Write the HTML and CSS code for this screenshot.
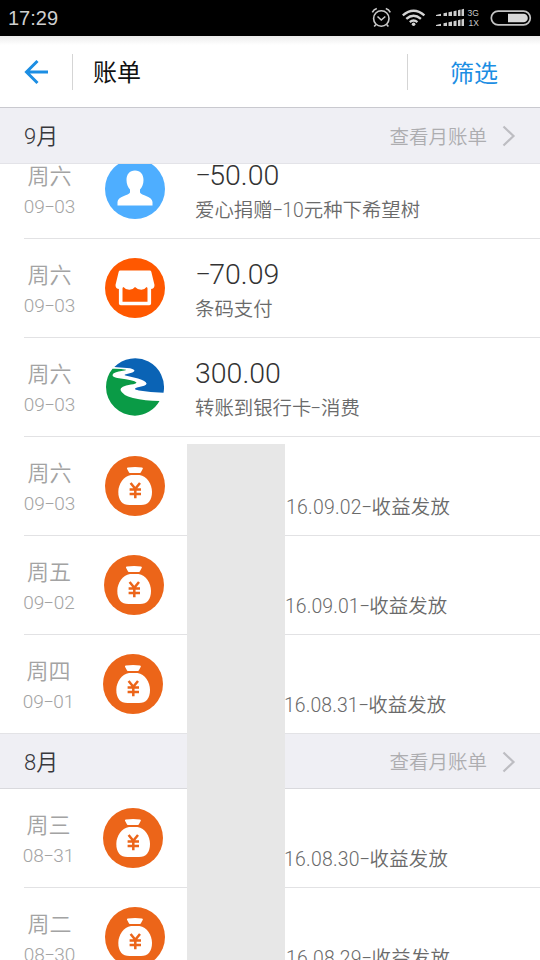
FILE: index.html
```html
<!DOCTYPE html>
<html lang="zh-CN">
<head>
<meta charset="utf-8">
<title>账单</title>
<link rel="stylesheet" href="styles.css">
</head>
<body>
<svg class="defs" width="0" height="0">
  <symbol id="bag" viewBox="0 0 60 60">
    <circle cx="30" cy="30" r="30" fill="#ec6519"/>
    <path d="M22.800 11.500q7.500-1 14.200 0q1.200.2.800 1.200l-1.900 3.500q-.5.900-1.600.9h-8.800q-1.100 0-1.600-.9l-1.900-3.500q-.4-1 .8-1.200z" fill="#fff"/>
    <path d="M26 19h8.500c7.500 1.200 12.500 9 12.500 17 0 8.500-4 13-11 13H24.500c-7.200 0-11.200-4.500-11.200-13 0-8 5.200-15.800 12.700-17z" fill="#fff"/>
    <path d="M25.600 27l4.700 5.800L35 27M30.300 33v9.200M24.600 33.500H36M24.600 38H36" fill="none" stroke="#ec6519" stroke-width="2.500"/>
  </symbol>
  <symbol id="chev" viewBox="0 0 14 22">
    <path d="M1.500 1.500L11.500 11L1.500 20.500" fill="none" stroke="#bdbdc2" stroke-width="2.200"/>
  </symbol>
</svg>
<div class="screen">
  <div class="status">
    <span class="clock">17:29</span>
    <svg class="status-icons" width="170" height="36" viewBox="370 0 170 36">
      <g fill="none" stroke="#c9c9c9" stroke-width="1.600">
        <circle cx="381.300" cy="18.500" r="7.700"/>
        <path d="M377.500 16.500l3.800 3.500l4-3.500M372.300 12.300q1.500-3 4.500-3.800M390.300 12.300q-1.500-3-4.500-3.800M376 24.500l-1.800 2M386.600 24.500l1.800 2"/>
      </g>
      <g fill="none" stroke="#d4d4d4" stroke-width="2.400">
        <path d="M402.800 15.300q10.800-9.300 21.600 0M406.300 18.800q7.300-6.100 14.600 0M409.800 22.200q3.800-3.200 7.600 0"/>
      </g>
      <circle cx="413.600" cy="24.300" r="1.800" fill="#d4d4d4"/>
      <g fill="#cdcdcd">
        <path d="M436 15l5-1.300v2.300h-5zM443.500 13.200l3.500-.7v3.500h-3.500zM448.500 12.200l3.500-.7v4.500h-3.500zM453.500 11.200l3-.7v5.500h-3zM458 10.200l2.500-.6v6.400H458zM461.500 9.400l2.500-.6v7.200h-2.500z"/>
        <path d="M436 25l5-1.300v2.300h-5zM443.500 23.200l3.500-.7v3.500h-3.500zM448.500 22.200l3.500-.7v4.500h-3.500zM453.500 21.200l3-.7v5.500h-3zM458 20.200l2.500-.6v6.400H458zM461.500 19.400l2.500-.6v7.200h-2.500z"/>
      </g>
      <text x="467.500" y="16.200" class="net">3G</text>
      <text x="468.500" y="26" class="net">1X</text>
      <rect x="491.300" y="11.200" width="39" height="13.600" rx="6.800" fill="none" stroke="#c4c4c4" stroke-width="1.700"/>
      <path d="M508 13.700h15.500a4.300 4.300 0 0 1 0 8.600H508z" fill="#d8d8d8"/>
    </svg>
  </div>

  <div class="header">
    <svg class="back" width="24" height="26" viewBox="0 0 24 26">
      <path d="M13.500 2L2.500 13L13.500 24M2.500 13H24" fill="none" stroke="#1c8ee3" stroke-width="3"/>
    </svg>
    <i class="bar"></i>
    <h1 class="title">账单</h1>
    <i class="bar"></i>
    <a class="filter">筛选</a>
  </div>

  <div class="month"><span class="m">9月</span><span class="more">查看月账单</span><svg class="chev"><use href="#chev"/></svg></div>

  <div class="list">
    <div class="row first">
      <div class="when"><b>周六</b><span>09<i class="dash">-</i>03</span></div>
      <svg class="icon" viewBox="0 0 60 60">
        <circle cx="30" cy="30" r="30" fill="#4eaeff"/>
        <path d="M30 11.500c5.500 0 8.500 4 8.500 9.500 0 4-1.500 7.500-3.500 9.500v3c1 3 12.500 4 12.500 9.500v3.500h-35V43c0-5.500 11.500-6.500 12.500-9.500v-3c-2-2-3.500-5.500-3.500-9.500 0-5.500 3-9.500 8.500-9.500z" fill="#fff"/>
      </svg>
      <div class="info"><p class="amount"><i class="dash">-</i>50.00</p><p class="desc">爱心捐赠<i class="dash">-</i>10元种下希望树</p></div>
    </div>
    <div class="row">
      <div class="when"><b>周六</b><span>09<i class="dash">-</i>03</span></div>
      <svg class="icon" viewBox="0 0 60 60">
        <circle cx="30" cy="30" r="30" fill="#ff5800"/>
        <path d="M15.300 12.500h29.400q1.200 0 1.600 1.200l3.200 13.300q0 4-3.800 4q-3 0-4.200-2q-1.800 2.800-5.300 2.800t-6.200-2.800q-2 2.800-5.700 2.800t-5.800-2.800q-1.200 2-4.200 2q-3.800 0-3.800-4l3.200-13.300q.4-1.200 1.600-1.200z" fill="#fff"/>
        <path d="M15.700 30v15.500h28.600V30" fill="none" stroke="#fff" stroke-width="3.600" stroke-linejoin="round"/>
      </svg>
      <div class="info"><p class="amount"><i class="dash">-</i>70.09</p><p class="desc">条码支付</p></div>
    </div>
    <div class="row">
      <div class="when"><b>周六</b><span>09<i class="dash">-</i>03</span></div>
      <svg class="icon" viewBox="0 0 60 60">
        <path d="M9.300 10A29 29 0 0 1 58.500 35.800Q45 35.500 34 33.500Q27 32 32 30.500Q42 28.500 41.500 26.500Q41 24 33 21.500L20.500 18.500Q18.500 17.800 21 17.300Q29.500 15.500 29.500 13.800Q29 11.500 22 11Q15 10.500 9.300 10z" fill="#0a63b5"/>
        <path d="M7.500 11.700Q16 11.500 21 12.800Q21.500 13.300 18 13.800Q8 15 7.500 18Q7.500 20.500 14 21.300Q29 23 31.500 25.500Q31 27 26 27.500Q15 29 15.500 33Q17 38 28 41Q40 44 54.500 44A28.700 28.700 0 0 1 30 58.700A28.900 28.900 0 0 1 1 30A28.900 28.900 0 0 1 7.500 11.700z" fill="#0a9b46"/>
      </svg>
      <div class="info"><p class="amount">300.00</p><p class="desc">转账到银行卡<i class="dash">-</i>消费</p></div>
    </div>
    <div class="row">
      <div class="when"><b>周六</b><span>09<i class="dash">-</i>03</span></div>
      <svg class="icon"><use href="#bag"/></svg>
      <div class="info late"><p class="desc">16.09.02<i class="dash">-</i>收益发放</p></div>
    </div>
    <div class="row">
      <div class="when w50"><b>周五</b><span>09<i class="dash">-</i>02</span></div>
      <svg class="icon"><use href="#bag"/></svg>
      <div class="info late tight"><p class="desc">16.09.01<i class="dash">-</i>收益发放</p></div>
    </div>
    <div class="row last">
      <div class="when w49"><b>周四</b><span>09<i class="dash">-</i>01</span></div>
      <svg class="icon"><use href="#bag"/></svg>
      <div class="info late tight"><p class="desc">16.08.31<i class="dash">-</i>收益发放</p></div>
    </div>
    <div class="month second"><span class="m">8月</span><span class="more">查看月账单</span><svg class="chev"><use href="#chev"/></svg></div>
    <div class="row">
      <div class="when w49"><b>周三</b><span>08<i class="dash">-</i>31</span></div>
      <svg class="icon"><use href="#bag"/></svg>
      <div class="info late"><p class="desc">16.08.30<i class="dash">-</i>收益发放</p></div>
    </div>
    <div class="row">
      <div class="when"><b>周二</b><span>08<i class="dash">-</i>30</span></div>
      <svg class="icon"><use href="#bag"/></svg>
      <div class="info late"><p class="desc">16.08.29<i class="dash">-</i>收益发放</p></div>
    </div>
  </div>
  <div class="mask"></div>
</div>
</body>
</html>
```
FILE: styles.css
```css
* { box-sizing: border-box; margin: 0; padding: 0; }
i { font-style: normal; }
body { background: #fff; font-family: Roboto, "Noto Sans CJK SC", sans-serif; font-weight: 350; }
.defs { position: absolute; }
.screen { position: relative; width: 540px; height: 960px; overflow: hidden; display: flex; flex-direction: column; }
.status { height: 36px; flex: none; background: #000; display: flex; justify-content: space-between; }
.clock { padding-left: 8px; font: 400 20px/37px "Liberation Sans", sans-serif; color: #cfcfcf; }
.net { font: 400 8.500px "Liberation Sans", sans-serif; fill: #c9c9c9; }
.header { height: 72px; flex: none; display: flex; align-items: center; border-bottom: 1px solid #c9c9cf; background: linear-gradient(#ececec, #fff 9px); }
.back { margin-left: 24px; }
.bar { width: 1px; height: 36px; background: #d5d5d5; margin-left: 24px; }
.title { margin-left: 20px; padding-top: 2px; width: 314px; font-size: 24px; font-weight: 400; line-height: 36px; color: #111; }
.title + .bar { margin-left: 0; }
.filter { margin-left: 42px; padding-top: 4px; font-size: 24px; line-height: 36px; font-weight: 400; color: #1c8ee3; }
.month { height: 56px; flex: none; background: #efeff4; border-bottom: 1px solid #e3e3e8; display: flex; align-items: center; padding: 1px 24px 0; }
.m { flex: 1; padding-top: 2px; font-size: 22px; line-height: 30px; color: #38383c; }
.more { padding-top: 3px; font-size: 19.500px; line-height: 28px; color: #adadb0; }
.chev { width: 14px; height: 22px; margin-left: 15px; }
.list { flex: 1; min-height: 0; overflow: hidden; }
.row { position: relative; height: 99px; margin-left: 24px; border-bottom: 1px solid #e2e2e4; display: flex; }
.row.first { margin-top: -24px; }
.row.last { height: 98px; border-bottom: 0; }
.second { height: 56px; border-top: 1px solid #e3e3e6; border-bottom-color: #d9d9dd; }
.when { width: 51px; display: flex; flex-direction: column; align-items: center; color: #a3a3a3; }
.w50 { width: 50px; }
.w49 { width: 49px; }
.when b { font-weight: 350; font-size: 22px; line-height: 32px; margin-top: 21px; }
.when span { font-size: 19px; line-height: 26px; margin-top: 1px; white-space: nowrap; }
.icon { width: 60px; height: 60px; margin: 19px 30px 0; flex: none; }
.info { white-space: nowrap; }
.amount { font-size: 28.500px; line-height: 34px; margin-top: 19px; color: #333; }
.desc { font-size: 19.400px; line-height: 28px; margin-top: 4px; color: #6a6a6a; }
.late { padding: 53px 0 0 91px; }
.late .desc { letter-spacing: .25px; }
.tight .desc { letter-spacing: .1px; }
.dash { display: inline-block; width: .5em; text-align: center; transform: translateY(-1px) scaleX(1.700); }
.amount .dash { transform: translate(1px, -2px) scaleX(1.700); }
.mask { position: absolute; left: 187px; top: 444px; width: 98px; height: 516px; background: #e7e7e7; }
```
